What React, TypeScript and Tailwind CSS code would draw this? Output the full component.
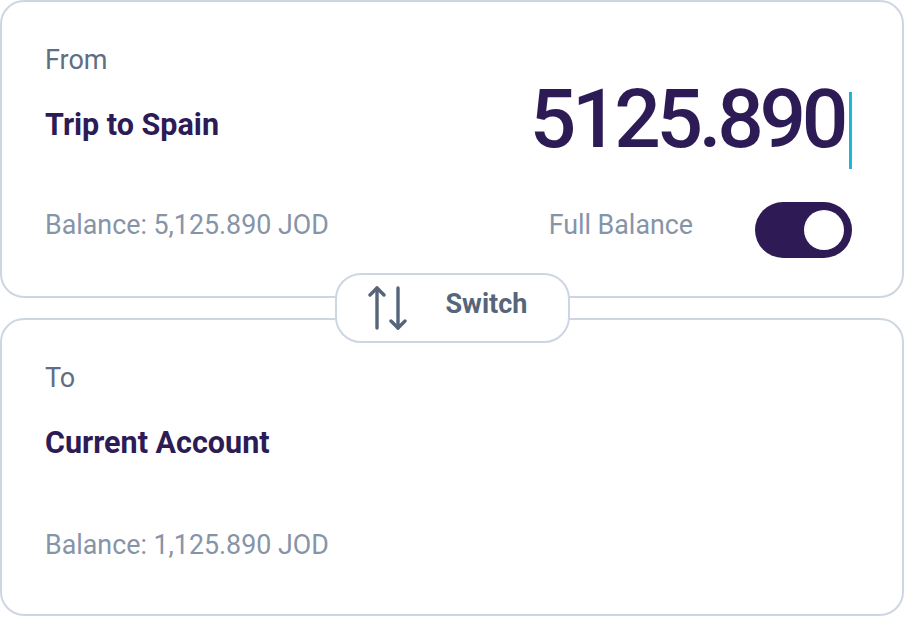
import React from "react";

function SwapIcon() {
    return (
        <svg width="40" height="44" viewBox="0 0 40 44" fill="none" stroke="currentColor" strokeWidth="3.4" strokeLinecap="round" strokeLinejoin="round">
            {/* up arrow */}
            <path d="M9 42V2" />
            <path d="M2 9L9 2L16 9" />
            {/* down arrow */}
            <path d="M30 2V42" />
            <path d="M23 35L30 42L37 35" />
        </svg>
    );
}

function Toggle({ on }: { on: boolean }) {
    return (
        <div
            className={`flex h-[56px] w-[97px] items-center rounded-full px-[8px] ${on ? "justify-end bg-[#2e1b55]" : "justify-start bg-[#cbd5e1]"}`}
        >
            <div className="h-[40px] w-[40px] rounded-full bg-white" />
        </div>
    );
}

export default function App() {
    const [fullBalance, setFullBalance] = React.useState(true);

    return (
        <div
            className="flex h-[618px] w-[904px] flex-col bg-white"
            style={{ fontFamily: "Roboto, 'Liberation Sans', sans-serif" }}
        >
            {/* From card */}
            <div className="flex h-[298px] flex-col rounded-[24px] border-2 border-[#cdd6e2] pl-[43px] pr-[50px] pb-[38px]">
                <div className="flex justify-between">
                    <div className="flex flex-col">
                        <span className="mt-[42px] text-[27px] leading-[32px] text-[#5f6e84]">From</span>
                        <span className="mt-[32px] text-[30.5px] font-bold leading-[34px] text-[#2d1b55]">Trip to Spain</span>
                    </div>
                    <div className="flex items-start">
                        <span className="mt-[76px] text-[82px] font-medium leading-[82px] tracking-[-0.053em] text-[#2d1b55]">5125.890</span>
                        <div className="ml-[5px] mt-[90px] h-[77px] w-[3px] bg-[#1eb6d6]" />
                    </div>
                </div>
                <div className="mt-auto flex items-start justify-between">
                    <span className="mt-[7px] text-[26.8px] leading-[32px] text-[#8694a7]">Balance: 5,125.890 JOD</span>
                    <div className="flex items-start gap-[62px]">
                        <span className="mt-[7px] text-[26.8px] leading-[32px] text-[#8694a7]">Full Balance</span>
                        <button type="button" onClick={() => setFullBalance(!fullBalance)}>
                            <Toggle on={fullBalance} />
                        </button>
                    </div>
                </div>
            </div>

            {/* Switch button */}
            <div className="relative z-10 flex h-[20px] items-center justify-center">
                <button
                    type="button"
                    className="-my-[25px] flex h-[70px] w-[235px] items-center gap-[38px] rounded-[26px] border-2 border-[#cdd6e2] bg-white pl-[31px] text-[#566579]"
                >
                    <SwapIcon />
                    <span className="-mt-[8px] text-[27px] font-bold leading-[30px]">Switch</span>
                </button>
            </div>

            {/* To card */}
            <div className="flex h-[298px] flex-col rounded-[24px] border-2 border-[#cdd6e2] pl-[43px] pr-[50px] pb-[53px]">
                <span className="mt-[42px] text-[27px] leading-[32px] text-[#5f6e84]">To</span>
                <span className="mt-[32px] text-[30.5px] font-bold leading-[34px] text-[#2d1b55]">Current Account</span>
                <span className="mt-auto text-[26.8px] leading-[32px] text-[#8694a7]">Balance: 1,125.890 JOD</span>
            </div>
        </div>
    );
}
